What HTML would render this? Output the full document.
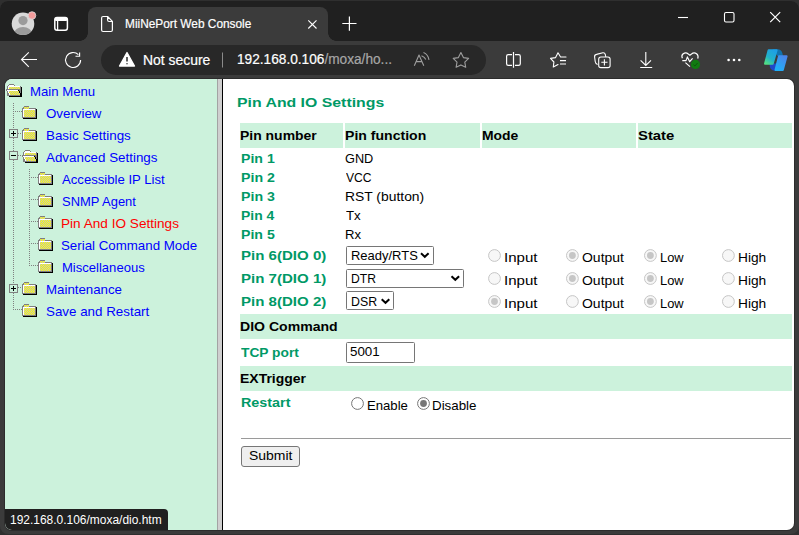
<!DOCTYPE html>
<html><head><meta charset="utf-8">
<style>
html,body{margin:0;padding:0;}
body{width:799px;height:535px;overflow:hidden;position:relative;background:#2f2f2f;font-family:"Liberation Sans",sans-serif;}
.abs{position:absolute;}
#win{position:absolute;left:0px;top:1px;width:799px;height:533px;border-radius:8px;background:#3b3b3b;overflow:hidden;}
#strip{position:absolute;left:0px;top:1px;width:799px;height:40px;background:#202020;border-radius:8px 8px 0 0;}
#tab{position:absolute;left:88px;top:7px;width:240px;height:34px;background:#3b3b3b;border-radius:8px 8px 0 0;}
#flareL{position:absolute;left:80px;top:33px;width:8px;height:8px;background:radial-gradient(circle at 0 0,#202020 7.5px,#3b3b3b 8px);}
#flareR{position:absolute;left:328px;top:33px;width:8px;height:8px;background:radial-gradient(circle at 100% 0,#202020 7.5px,#3b3b3b 8px);}
#pill{position:absolute;left:101px;top:45px;width:385px;height:30px;border-radius:15px;background:#282828;}
#content{position:absolute;left:5px;top:79px;width:789px;height:451px;border-radius:7px;overflow:hidden;background:#fff;box-shadow:0 0 0 1px #2c2c2c;}
#leftf{position:absolute;left:0;top:0;width:212px;height:451px;background:#ccf2dc;}
#fb1{position:absolute;left:212px;top:0;width:1px;height:451px;background:#a3a3a3;}
#fb2{position:absolute;left:213px;top:0;width:4px;height:451px;background:#cfcfcf;}
#fb3{position:absolute;left:217px;top:0;width:1px;height:451px;background:#000;}
.hdr{position:absolute;background:#ccf2dc;}
#status{position:absolute;left:5px;top:509px;width:163px;height:21px;background:#202020;border-radius:0 4px 0 7px;}
.tx{position:absolute;white-space:nowrap;font-family:"Liberation Sans",sans-serif;transform-origin:0 0;}
.sel{position:absolute;box-sizing:border-box;border:1px solid #767676;border-radius:1.5px;background:#fff;}
#ovl{position:absolute;left:0;top:0;}
#t_tab,#t_ns,#t_url{-webkit-text-stroke:0.2px currentColor;}
</style></head><body>
<div id="win"></div>
<div id="strip"></div>
<div id="flareL"></div>
<div id="flareR"></div>
<div id="tab"></div>
<div id="pill"></div>
<div id="content">
  <div id="leftf"></div>
  <div id="fb1"></div><div id="fb2"></div><div id="fb3"></div>
</div>
<!-- header rows -->
<div class="hdr" style="left:240px;top:123px;width:103px;height:25px"></div>
<div class="hdr" style="left:345px;top:123px;width:135px;height:25px"></div>
<div class="hdr" style="left:482px;top:123px;width:154px;height:25px"></div>
<div class="hdr" style="left:638px;top:123px;width:154px;height:25px"></div>
<div class="hdr" style="left:240px;top:314px;width:552px;height:25px"></div>
<div class="hdr" style="left:240px;top:366px;width:552px;height:25px"></div>
<div class="abs" style="left:241px;top:438px;width:550px;height:1px;background:#9a9a9a"></div>
<!-- selects -->
<div class="sel" style="left:346px;top:246px;width:88px;height:19px"></div>
<div class="sel" style="left:346px;top:269px;width:118px;height:19px"></div>
<div class="sel" style="left:346px;top:291px;width:48px;height:19px"></div>
<div class="sel" style="left:346px;top:342px;width:69px;height:21px"></div>
<div class="sel" style="left:241px;top:446px;width:59px;height:21px;background:#efefef;border-radius:3px"></div>
<div id="status"></div>
<svg id="ovl" width="799" height="535" viewBox="0 0 799 535">
  <defs>
    <pattern id="dith" width="2" height="2" patternUnits="userSpaceOnUse" shape-rendering="crispEdges">
      <rect width="2" height="2" fill="#ffff00"/><rect width="1" height="1" fill="#c0c0c0"/><rect x="1" y="1" width="1" height="1" fill="#c0c0c0"/>
    </pattern>
    <g id="folder" shape-rendering="crispEdges"><rect x="1" y="3" width="14" height="10" fill="#000000"/><rect x="0" y="2" width="14" height="10" fill="#808080"/><rect x="1" y="1" width="6" height="1" fill="#808080"/><rect x="2" y="0" width="5" height="1" fill="#808080"/><rect x="2" y="1" width="5" height="1" fill="url(#dith)"/><rect x="1" y="3" width="12" height="8" fill="#ffffff"/><rect x="2" y="4" width="11" height="7" fill="url(#dith)"/><rect x="2" y="2" width="5" height="1" fill="url(#dith)"/></g>
    <g id="folderopen" shape-rendering="crispEdges"><rect x="3" y="3" width="13" height="10" fill="#000000"/><rect x="1" y="2" width="14" height="10" fill="#808080"/><rect x="2" y="1" width="7" height="1" fill="#808080"/><rect x="3" y="0" width="5" height="1" fill="#808080"/><rect x="2" y="2" width="12" height="3" fill="#ffffff"/><rect x="3" y="1" width="5" height="1" fill="#ffffff"/><rect x="3" y="3" width="11" height="2" fill="url(#dith)"/><rect x="0" y="5" width="12" height="1" fill="#808080"/><rect x="0" y="6" width="1" height="1" fill="#808080"/><rect x="1" y="6" width="11" height="1" fill="#ffffff"/><rect x="12" y="6" width="1" height="1" fill="#000000"/><rect x="1" y="7" width="1" height="2" fill="#808080"/><rect x="2" y="7" width="1" height="2" fill="#ffffff"/><rect x="3" y="7" width="10" height="2" fill="url(#dith)"/><rect x="13" y="7" width="1" height="2" fill="#000000"/><rect x="2" y="9" width="1" height="2" fill="#808080"/><rect x="3" y="9" width="1" height="2" fill="#ffffff"/><rect x="4" y="9" width="10" height="2" fill="url(#dith)"/><rect x="14" y="9" width="1" height="2" fill="#000000"/><rect x="3" y="11" width="11" height="1" fill="#808080"/><rect x="14" y="11" width="1" height="1" fill="#000000"/></g>
  </defs>
  <!-- tab strip icons -->
  <circle cx="23" cy="23.8" r="11.3" fill="#d9d9d9"/>
  <circle cx="23" cy="20.6" r="4.6" fill="#9b9b9b"/>
  <clipPath id="avc"><circle cx="23" cy="23.8" r="11.3"/></clipPath>
  <ellipse cx="23" cy="33.5" rx="9" ry="6.5" fill="#9b9b9b" clip-path="url(#avc)"/>
  <circle cx="32" cy="15.5" r="3.8" fill="#f39b9b" stroke="#d9d9d9" stroke-width="0.8"/>
  <rect x="54.8" y="17.6" width="12.6" height="12.6" rx="2.2" fill="none" stroke="#fff" stroke-width="1.5"/>
  <rect x="54.8" y="17.6" width="12.6" height="3.4" rx="1.5" fill="#fff"/>
  <line x1="57.6" y1="20.5" x2="57.6" y2="30.2" stroke="#fff" stroke-width="1.3"/>
  <path d="M101.6 18 Q101.6 16.5 103.1 16.5 H107.6 L112.4 21.3 V30 Q112.4 31.5 110.9 31.5 H103.1 Q101.6 31.5 101.6 30 Z M107.6 16.8 V20 Q107.6 21.5 109.1 21.5 H112.2" fill="none" stroke="#fff" stroke-width="1.2" stroke-linejoin="round"/>
  <path d="M308.3 20.3 L316.5 28.5 M316.5 20.3 L308.3 28.5" stroke="#fff" stroke-width="1.1"/>
  <path d="M349.4 16.4 V30.7 M342.3 23.5 H356.5" stroke="#fff" stroke-width="1.2"/>
  <path d="M678 17.5 H688" stroke="#fff" stroke-width="1.1"/>
  <rect x="724.5" y="12.5" width="9.5" height="9.5" rx="1.5" fill="none" stroke="#fff" stroke-width="1.1"/>
  <path d="M770.2 12.2 L780.2 22.2 M780.2 12.2 L770.2 22.2" stroke="#fff" stroke-width="1.2"/>
  <!-- toolbar icons -->
  <path d="M37 59.5 H21.5 M28.8 52.3 L21.5 59.5 L28.8 66.8" fill="none" stroke="#fff" stroke-width="1.1"/>
  <path d="M80.6 60 A7.5 7.5 0 1 1 78.4 54.7 M79.6 52.4 V56.2 H75.5" fill="none" stroke="#fff" stroke-width="1.15"/>
  <path d="M119.5 66 L127 52.5 L134.5 66 Z" fill="#fff" stroke="#fff" stroke-width="1.3" stroke-linejoin="round"/>
  <path d="M127 57 V61.5 M127 63.3 V64.3" stroke="#282828" stroke-width="1.5"/>
  <path d="M222.5 52.5 V67.5" stroke="#8a8a8a" stroke-width="1"/>
  <path d="M414.3 65.7 L419 55 L423.8 65.7 M416 61.6 H422" fill="none" stroke="#9e9e9e" stroke-width="1.1" stroke-linejoin="round"/>
  <path d="M421.5 55.8 Q424.8 57 425.8 59.5 M423.5 52.6 Q428 54.5 429 59.8" fill="none" stroke="#9e9e9e" stroke-width="1.1"/>
  <path d="M460.9 52.6 L463.4 57.6 L468.6 58.4 L464.8 62.2 L465.7 67.3 L460.9 64.9 L456.1 67.3 L457 62.2 L453.2 58.4 L458.4 57.6 Z" fill="none" stroke="#9e9e9e" stroke-width="1.1" stroke-linejoin="round"/>
  <path d="M512 54.6 H508.3 Q506.6 54.6 506.6 56.3 V63.7 Q506.6 65.4 508.3 65.4 H512 M515 54.6 H518.6 Q520.3 54.6 520.3 56.3 V63.7 Q520.3 65.4 518.6 65.4 H515 M513.5 52 V67.8" fill="none" stroke="#fff" stroke-width="1.2"/>
  <path d="M566 57 H560.6 L558 52.8 L555.6 57.6 L550.5 58.4 L553.9 62 L553.3 67 L558 64.6" fill="none" stroke="#fff" stroke-width="1.1" stroke-linejoin="round" stroke-linecap="round"/>
  <path d="M560 60.6 H566 M560 64 H566" stroke="#fff" stroke-width="1.1"/>
  <path d="M597.6 64.5 Q595.5 63.8 595.2 61.5 L594.6 57 Q594.3 54.8 596.5 54.4 L602.8 52.8 Q604.8 52.5 605.3 54.5 L605.8 57" fill="none" stroke="#fff" stroke-width="1.1"/>
  <rect x="598.7" y="57" width="11.4" height="10.6" rx="2.2" fill="#3b3b3b" stroke="#fff" stroke-width="1.1"/>
  <path d="M604.4 59.2 V65.4 M601.3 62.3 H607.5" stroke="#fff" stroke-width="1.1"/>
  <path d="M645.8 52 V65.5 M640.6 60.3 L645.8 65.5 L651 60.3 M640.2 67.5 H652.2" fill="none" stroke="#fff" stroke-width="1.1"/>
  <path d="M682.4 58.3 Q681 55.6 683.2 53.8 Q685.8 51.8 688.3 54 L689.9 55.3 L691.5 54 Q694 51.8 696.6 53.8 Q698.8 55.6 697.8 58.6" fill="none" stroke="#fff" stroke-width="1.15"/>
  <path d="M682.3 60.6 H686 L687.4 56.9 L689.7 61.7 L692.6 58.3 M685.4 62.6 L690 66.6" fill="none" stroke="#fff" stroke-width="1.15" stroke-linejoin="round"/>
  <circle cx="695.5" cy="64.4" r="4.6" fill="#117a11"/>
  <path d="M693.4 64.6 L694.9 66 L697.6 63" fill="none" stroke="#0c550c" stroke-width="1"/>
  <circle cx="728.6" cy="60" r="1.3" fill="#fff"/><circle cx="734" cy="60" r="1.3" fill="#fff"/><circle cx="739.3" cy="60" r="1.3" fill="#fff"/>
  <!-- copilot -->
  <defs>
    <linearGradient id="cpa" x1="0" y1="0" x2="0" y2="1"><stop offset="0" stop-color="#1aa3e0"/><stop offset="1" stop-color="#3dd68c"/></linearGradient>
    <linearGradient id="cpb" x1="0" y1="0" x2="0" y2="1"><stop offset="0" stop-color="#2f7de1"/><stop offset="1" stop-color="#1aa0f0"/></linearGradient>
  </defs>
  <defs>
    <linearGradient id="cpl" x1="0.8" y1="0" x2="0.2" y2="1"><stop offset="0" stop-color="#1e9fe6"/><stop offset="0.6" stop-color="#22b3c9"/><stop offset="1" stop-color="#4fdc86"/></linearGradient>
    <linearGradient id="cpr" x1="0.8" y1="0" x2="0.2" y2="1"><stop offset="0" stop-color="#4a86ea"/><stop offset="1" stop-color="#1fb0f8"/></linearGradient>
  </defs>
  <path d="M769.5 63.5 Q769.5 70.8 775 70.8 L779 70.8 L777 63.5 Z" fill="#2048c8"/>
  <path d="M772.5 49.2 H778 Q782.3 49.5 783 56 L777.5 56 Z" fill="#1172ad"/>
  <path d="M768.6 50.2 H776.6 L772.7 63.8 H765 Z" fill="url(#cpl)" stroke="url(#cpl)" stroke-width="2" stroke-linejoin="round"/>
  <path d="M779 56.2 H786.6 L782.8 70 H775.5 Z" fill="url(#cpr)" stroke="url(#cpr)" stroke-width="2" stroke-linejoin="round"/>
  <!-- left menu tree -->
  <use href="#folderopen" x="6" y="84"/>
  <use href="#folder" x="22" y="106"/>
  <use href="#folder" x="22" y="128"/>
  <use href="#folderopen" x="22" y="150"/>
  <use href="#folder" x="38" y="172"/>
  <use href="#folder" x="38" y="194"/>
  <use href="#folder" x="38" y="216"/>
  <use href="#folder" x="38" y="238"/>
  <use href="#folder" x="38" y="260"/>
  <use href="#folder" x="22" y="282"/>
  <use href="#folder" x="22" y="304"/>
  <g stroke="#808080" stroke-width="1" stroke-dasharray="1 1" fill="none">
    <path d="M13.5 103 V129 M13.5 138 V151 M13.5 160 V284 M13.5 293 V310"/>
    <path d="M15 111.5 H22 M18 133.5 H22 M18 155.5 H22 M18 287.5 H22 M15 309.5 H22"/>
    <path d="M29.5 169 V266"/>
    <path d="M31 177.5 H38 M31 199.5 H38 M31 221.5 H38 M31 243.5 H38 M31 265.5 H38"/>
  </g>
  <g fill="none" stroke="#808080" stroke-width="1">
    <rect x="9.5" y="129.5" width="8" height="8"/>
    <rect x="9.5" y="151.5" width="8" height="8"/>
    <rect x="9.5" y="284.5" width="8" height="8"/>
  </g>
  <path d="M11 133.5 H16 M13.5 131 V136 M11 155.5 H16 M11 288.5 H16 M13.5 286 V291" stroke="#000" stroke-width="1"/>
  <!-- radios -->
  <g id="radios"></g>
</svg>
<svg class="abs" style="left:0;top:0;position:absolute" width="799" height="535">
<circle cx="494.5" cy="255.5" r="5.9" fill="#f7f7f7" stroke="#c6c6c6" stroke-width="1"/>
<circle cx="572.4" cy="255.5" r="5.9" fill="#f7f7f7" stroke="#c6c6c6" stroke-width="1"/>
<circle cx="572.4" cy="255.5" r="3.4" fill="#c6c6c6"/>
<circle cx="650.4" cy="255.5" r="5.9" fill="#f7f7f7" stroke="#c6c6c6" stroke-width="1"/>
<circle cx="650.4" cy="255.5" r="3.4" fill="#c6c6c6"/>
<circle cx="728.4" cy="255.5" r="5.9" fill="#f7f7f7" stroke="#c6c6c6" stroke-width="1"/>
<circle cx="494.5" cy="278.5" r="5.9" fill="#f7f7f7" stroke="#c6c6c6" stroke-width="1"/>
<circle cx="572.4" cy="278.5" r="5.9" fill="#f7f7f7" stroke="#c6c6c6" stroke-width="1"/>
<circle cx="572.4" cy="278.5" r="3.4" fill="#c6c6c6"/>
<circle cx="650.4" cy="278.5" r="5.9" fill="#f7f7f7" stroke="#c6c6c6" stroke-width="1"/>
<circle cx="650.4" cy="278.5" r="3.4" fill="#c6c6c6"/>
<circle cx="728.4" cy="278.5" r="5.9" fill="#f7f7f7" stroke="#c6c6c6" stroke-width="1"/>
<circle cx="494.5" cy="301.5" r="5.9" fill="#f7f7f7" stroke="#c6c6c6" stroke-width="1"/>
<circle cx="494.5" cy="301.5" r="3.4" fill="#c6c6c6"/>
<circle cx="572.4" cy="301.5" r="5.9" fill="#f7f7f7" stroke="#c6c6c6" stroke-width="1"/>
<circle cx="650.4" cy="301.5" r="5.9" fill="#f7f7f7" stroke="#c6c6c6" stroke-width="1"/>
<circle cx="650.4" cy="301.5" r="3.4" fill="#c6c6c6"/>
<circle cx="728.4" cy="301.5" r="5.9" fill="#f7f7f7" stroke="#c6c6c6" stroke-width="1"/>
<circle cx="357.5" cy="403.5" r="5.9" fill="#fff" stroke="#767676" stroke-width="1"/>
<circle cx="423.5" cy="403.5" r="5.9" fill="#fff" stroke="#767676" stroke-width="1"/>
<circle cx="423.5" cy="403.5" r="3.4" fill="#767676"/>
</svg>
<span id="t_tab" class="tx" style="left:124.79px;top:15.67px;font-size:12.50px;line-height:16px;font-weight:400;color:#ffffff;letter-spacing:0.000px;transform:scaleX(0.9489)">MiiNePort Web Console</span>
<span id="t_ns" class="tx" style="left:142.73px;top:51.72px;font-size:13.80px;line-height:17px;font-weight:400;color:#ffffff;letter-spacing:0.000px;transform:scaleX(1.0084)">Not secure</span>
<span id="t_url" class="tx" style="left:236.57px;top:50.29px;font-size:14.00px;line-height:18px;font-weight:400;color:#ffffff;letter-spacing:0.000px;transform:scaleX(0.9762)">192.168.0.106<span style="color:#a6a6a6">/moxa/ho...</span></span>
<span id="t_status" class="tx" style="left:9.64px;top:511.51px;font-size:12.50px;line-height:16px;font-weight:400;color:#ffffff;letter-spacing:0.000px;transform:scaleX(0.9570)">192.168.0.106/moxa/dio.htm</span>
<span id="m0" class="tx" style="left:29.68px;top:83.70px;font-size:12.40px;line-height:16px;font-weight:400;color:#0000ff;letter-spacing:0.000px;transform:scaleX(1.0624)">Main Menu</span>
<span id="m1" class="tx" style="left:45.74px;top:105.70px;font-size:12.40px;line-height:16px;font-weight:400;color:#0000ff;letter-spacing:0.000px;transform:scaleX(1.0728)">Overview</span>
<span id="m2" class="tx" style="left:45.57px;top:127.70px;font-size:12.40px;line-height:16px;font-weight:400;color:#0000ff;letter-spacing:0.000px;transform:scaleX(1.0799)">Basic Settings</span>
<span id="m3" class="tx" style="left:45.56px;top:149.70px;font-size:12.40px;line-height:16px;font-weight:400;color:#0000ff;letter-spacing:0.000px;transform:scaleX(1.0786)">Advanced Settings</span>
<span id="m4" class="tx" style="left:61.56px;top:171.70px;font-size:12.40px;line-height:16px;font-weight:400;color:#0000ff;letter-spacing:0.000px;transform:scaleX(1.0606)">Accessible IP List</span>
<span id="m5" class="tx" style="left:61.72px;top:193.70px;font-size:12.40px;line-height:16px;font-weight:400;color:#0000ff;letter-spacing:0.000px;transform:scaleX(1.0449)">SNMP Agent</span>
<span id="m6" class="tx" style="left:60.58px;top:215.70px;font-size:12.40px;line-height:16px;font-weight:400;color:#ff0000;letter-spacing:0.000px;transform:scaleX(1.0980)">Pin And IO Settings</span>
<span id="m7" class="tx" style="left:60.73px;top:237.70px;font-size:12.40px;line-height:16px;font-weight:400;color:#0000ff;letter-spacing:0.000px;transform:scaleX(1.0735)">Serial Command Mode</span>
<span id="m8" class="tx" style="left:61.68px;top:259.70px;font-size:12.40px;line-height:16px;font-weight:400;color:#0000ff;letter-spacing:0.000px;transform:scaleX(1.0529)">Miscellaneous</span>
<span id="m9" class="tx" style="left:45.62px;top:281.70px;font-size:12.40px;line-height:16px;font-weight:400;color:#0000ff;letter-spacing:0.000px;transform:scaleX(1.0709)">Maintenance</span>
<span id="m10" class="tx" style="left:45.70px;top:303.70px;font-size:12.40px;line-height:16px;font-weight:400;color:#0000ff;letter-spacing:0.000px;transform:scaleX(1.0784)">Save and Restart</span>
<span id="title" class="tx" style="left:236.69px;top:94.50px;font-size:13.00px;line-height:16px;font-weight:700;color:#009966;letter-spacing:0.000px;transform:scaleX(1.2180)">Pin And IO Settings</span>
<span id="h1" class="tx" style="left:239.73px;top:127.70px;font-size:12.40px;line-height:16px;font-weight:700;color:#000;letter-spacing:0.000px;transform:scaleX(1.1267)">Pin number</span>
<span id="h2" class="tx" style="left:344.73px;top:127.70px;font-size:12.40px;line-height:16px;font-weight:700;color:#000;letter-spacing:0.000px;transform:scaleX(1.1360)">Pin function</span>
<span id="h3" class="tx" style="left:481.73px;top:127.70px;font-size:12.40px;line-height:16px;font-weight:700;color:#000;letter-spacing:0.000px;transform:scaleX(1.1222)">Mode</span>
<span id="h4" class="tx" style="left:637.53px;top:127.70px;font-size:12.40px;line-height:16px;font-weight:700;color:#000;letter-spacing:0.000px;transform:scaleX(1.1976)">State</span>
<span id="p0" class="tx" style="left:240.70px;top:150.70px;font-size:12.40px;line-height:16px;font-weight:700;color:#009966;letter-spacing:0.000px;transform:scaleX(1.1391)">Pin 1</span>
<span id="f0" class="tx" style="left:344.76px;top:150.70px;font-size:12.40px;line-height:16px;font-weight:400;color:#000;letter-spacing:0.000px;transform:scaleX(1.0273)">GND</span>
<span id="p1" class="tx" style="left:240.70px;top:169.70px;font-size:12.40px;line-height:16px;font-weight:700;color:#009966;letter-spacing:0.000px;transform:scaleX(1.1443)">Pin 2</span>
<span id="f1" class="tx" style="left:345.55px;top:169.70px;font-size:12.40px;line-height:16px;font-weight:400;color:#000;letter-spacing:0.000px;transform:scaleX(0.9786)">VCC</span>
<span id="p2" class="tx" style="left:240.70px;top:188.70px;font-size:12.40px;line-height:16px;font-weight:700;color:#009966;letter-spacing:0.000px;transform:scaleX(1.1436)">Pin 3</span>
<span id="f2" class="tx" style="left:344.57px;top:188.70px;font-size:12.40px;line-height:16px;font-weight:400;color:#000;letter-spacing:0.000px;transform:scaleX(1.1203)">RST (button)</span>
<span id="p3" class="tx" style="left:240.72px;top:207.71px;font-size:12.40px;line-height:16px;font-weight:700;color:#009966;letter-spacing:0.000px;transform:scaleX(1.1223)">Pin 4</span>
<span id="f3" class="tx" style="left:345.69px;top:208.30px;font-size:12.40px;line-height:16px;font-weight:400;color:#000;letter-spacing:0.000px;transform:scaleX(1.0727)">Tx</span>
<span id="p4" class="tx" style="left:240.70px;top:226.70px;font-size:12.40px;line-height:16px;font-weight:700;color:#009966;letter-spacing:0.000px;transform:scaleX(1.1403)">Pin 5</span>
<span id="f4" class="tx" style="left:344.65px;top:226.70px;font-size:12.40px;line-height:16px;font-weight:400;color:#000;letter-spacing:0.000px;transform:scaleX(1.0580)">Rx</span>
<span id="d0" class="tx" style="left:240.73px;top:247.70px;font-size:12.40px;line-height:16px;font-weight:700;color:#009966;letter-spacing:0.000px;transform:scaleX(1.2144)">Pin 6(DIO 0)</span>
<span id="in0" class="tx" style="left:503.58px;top:249.70px;font-size:12.40px;line-height:16px;font-weight:400;color:#000;letter-spacing:0.000px;transform:scaleX(1.2155)">Input</span>
<span id="out0" class="tx" style="left:581.65px;top:249.70px;font-size:12.40px;line-height:16px;font-weight:400;color:#000;letter-spacing:0.000px;transform:scaleX(1.1270)">Output</span>
<span id="low0" class="tx" style="left:659.71px;top:249.70px;font-size:12.40px;line-height:16px;font-weight:400;color:#000;letter-spacing:0.000px;transform:scaleX(1.0380)">Low</span>
<span id="high0" class="tx" style="left:737.57px;top:249.70px;font-size:12.40px;line-height:16px;font-weight:400;color:#000;letter-spacing:0.000px;transform:scaleX(1.1088)">High</span>
<span id="d1" class="tx" style="left:240.73px;top:270.70px;font-size:12.40px;line-height:16px;font-weight:700;color:#009966;letter-spacing:0.000px;transform:scaleX(1.2144)">Pin 7(DIO 1)</span>
<span id="in1" class="tx" style="left:503.58px;top:272.70px;font-size:12.40px;line-height:16px;font-weight:400;color:#000;letter-spacing:0.000px;transform:scaleX(1.2155)">Input</span>
<span id="out1" class="tx" style="left:581.65px;top:272.70px;font-size:12.40px;line-height:16px;font-weight:400;color:#000;letter-spacing:0.000px;transform:scaleX(1.1270)">Output</span>
<span id="low1" class="tx" style="left:659.71px;top:272.70px;font-size:12.40px;line-height:16px;font-weight:400;color:#000;letter-spacing:0.000px;transform:scaleX(1.0380)">Low</span>
<span id="high1" class="tx" style="left:737.57px;top:272.70px;font-size:12.40px;line-height:16px;font-weight:400;color:#000;letter-spacing:0.000px;transform:scaleX(1.1088)">High</span>
<span id="d2" class="tx" style="left:240.73px;top:293.70px;font-size:12.40px;line-height:16px;font-weight:700;color:#009966;letter-spacing:0.000px;transform:scaleX(1.2144)">Pin 8(DIO 2)</span>
<span id="in2" class="tx" style="left:503.58px;top:295.70px;font-size:12.40px;line-height:16px;font-weight:400;color:#000;letter-spacing:0.000px;transform:scaleX(1.2155)">Input</span>
<span id="out2" class="tx" style="left:581.65px;top:295.70px;font-size:12.40px;line-height:16px;font-weight:400;color:#000;letter-spacing:0.000px;transform:scaleX(1.1270)">Output</span>
<span id="low2" class="tx" style="left:659.71px;top:295.70px;font-size:12.40px;line-height:16px;font-weight:400;color:#000;letter-spacing:0.000px;transform:scaleX(1.0380)">Low</span>
<span id="high2" class="tx" style="left:737.57px;top:295.70px;font-size:12.40px;line-height:16px;font-weight:400;color:#000;letter-spacing:0.000px;transform:scaleX(1.1088)">High</span>
<span id="sel0" class="tx" style="left:350.68px;top:247.70px;font-size:12.40px;line-height:16px;font-weight:400;color:#000;letter-spacing:0.000px;transform:scaleX(1.0466)">Ready/RTS</span>
<span id="sel1" class="tx" style="left:350.52px;top:271.35px;font-size:12.40px;line-height:16px;font-weight:400;color:#000;letter-spacing:0.000px;transform:scaleX(0.9783)">DTR</span>
<span id="sel2" class="tx" style="left:350.72px;top:293.70px;font-size:12.40px;line-height:16px;font-weight:400;color:#000;letter-spacing:0.000px;transform:scaleX(0.9960)">DSR</span>
<span id="dioc" class="tx" style="left:239.73px;top:318.70px;font-size:12.40px;line-height:16px;font-weight:700;color:#000;letter-spacing:0.000px;transform:scaleX(1.1353)">DIO Command</span>
<span id="tcp" class="tx" style="left:240.59px;top:344.65px;font-size:12.40px;line-height:16px;font-weight:700;color:#009966;letter-spacing:0.000px;transform:scaleX(1.1106)">TCP port</span>
<span id="port" class="tx" style="left:349.52px;top:344.20px;font-size:12.40px;line-height:16px;font-weight:400;color:#000;letter-spacing:0.000px;transform:scaleX(1.0784)">5001</span>
<span id="ext" class="tx" style="left:239.73px;top:370.70px;font-size:12.40px;line-height:16px;font-weight:700;color:#000;letter-spacing:0.000px;transform:scaleX(1.1271)">EXTrigger</span>
<span id="rst" class="tx" style="left:240.59px;top:395.20px;font-size:12.40px;line-height:16px;font-weight:700;color:#009966;letter-spacing:0.000px;transform:scaleX(1.1584)">Restart</span>
<span id="en" class="tx" style="left:366.68px;top:398.04px;font-size:12.40px;line-height:16px;font-weight:400;color:#000;letter-spacing:0.000px;transform:scaleX(1.0601)">Enable</span>
<span id="dis" class="tx" style="left:431.66px;top:398.04px;font-size:12.40px;line-height:16px;font-weight:400;color:#000;letter-spacing:0.000px;transform:scaleX(1.0770)">Disable</span>
<span id="sub" class="tx" style="left:248.58px;top:448.36px;font-size:12.40px;line-height:16px;font-weight:400;color:#000;letter-spacing:0.000px;transform:scaleX(1.1281)">Submit</span>
<!-- chevrons -->
<svg class="abs" style="left:0;top:0" width="799" height="535">
  <path d="M421 253.2 L424.8 256.8 L428.6 253.2" fill="none" stroke="#000" stroke-width="2"/>
  <path d="M451.5 276.2 L455.3 279.8 L459.1 276.2" fill="none" stroke="#000" stroke-width="2"/>
  <path d="M381.7 299.2 L385.5 302.8 L389.3 299.2" fill="none" stroke="#000" stroke-width="2"/>
</svg>
</body></html>
